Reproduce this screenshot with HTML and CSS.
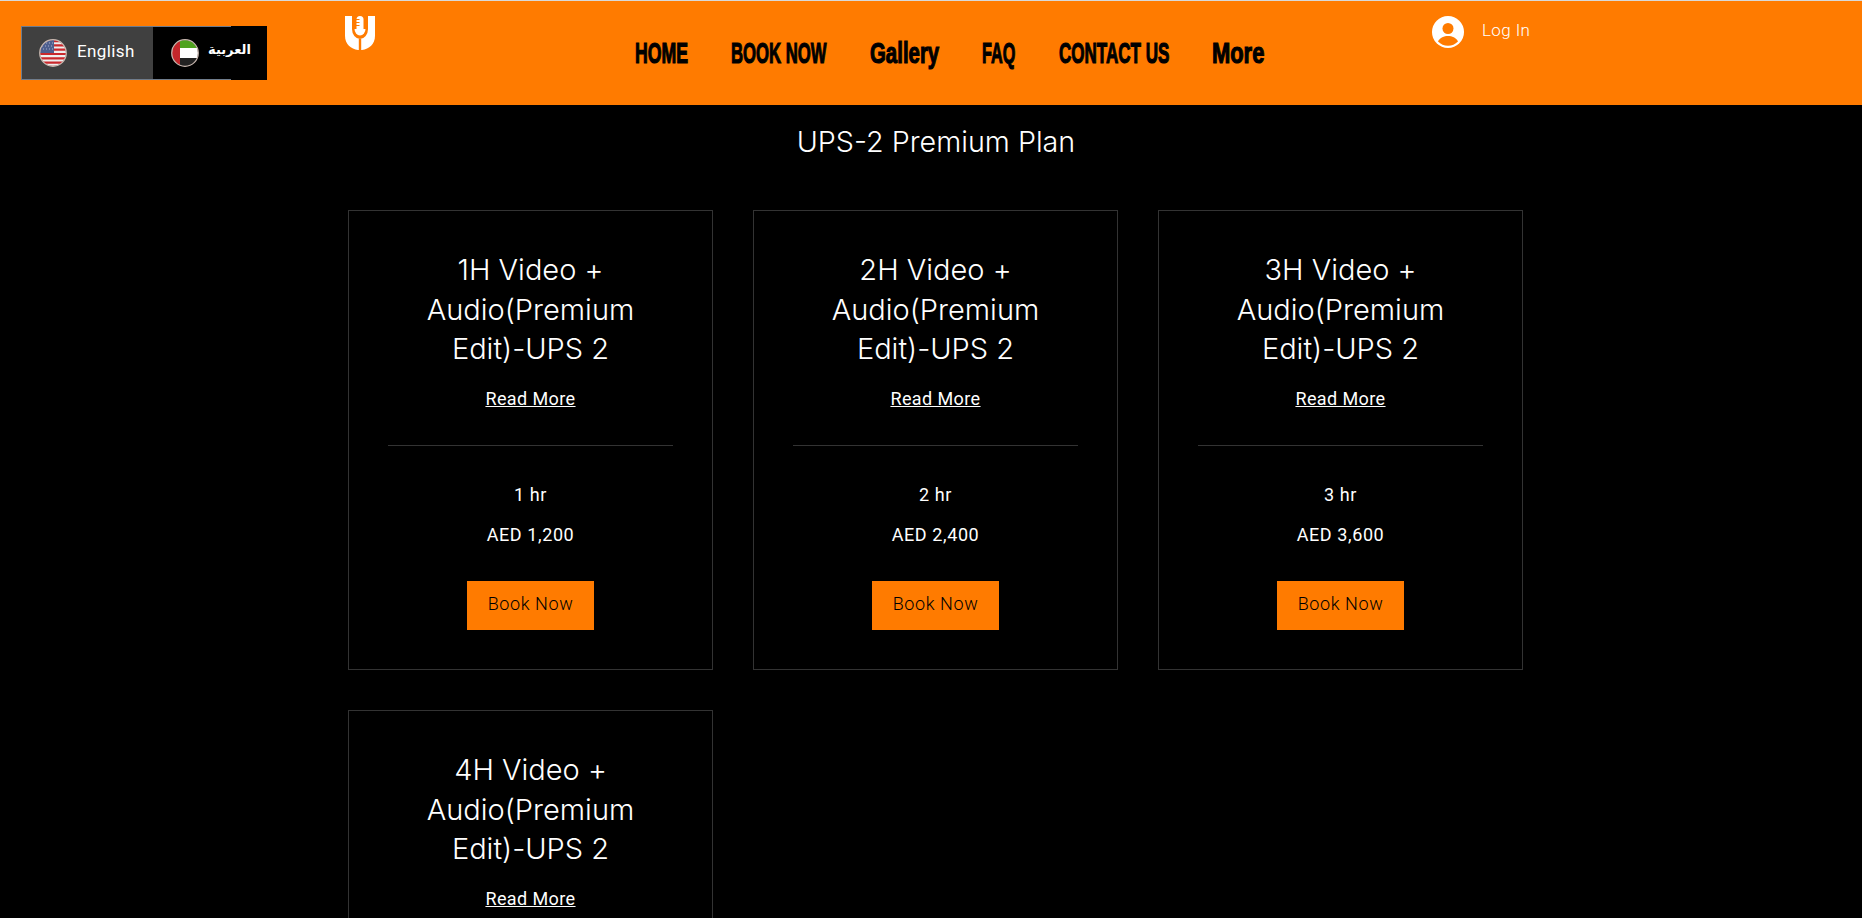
FILE: index.html
```html
<!DOCTYPE html>
<html lang="en">
<head>
<meta charset="utf-8">
<title>UPS-2 Premium Plan</title>
<link rel="stylesheet" href="styles.css">
</head>
<body>
<div class="page">
<header class="header">
  <div class="lang">
    <a class="lang-item lang-en">
      <svg class="flag" viewBox="0 0 28 28">
        <defs><clipPath id="c1"><circle cx="14" cy="14" r="13"/></clipPath></defs>
        <g clip-path="url(#c1)">
          <rect width="28" height="28" fill="#eee"/>
          <path d="M0 1h28v2.200H0zM0 5.300h28v2.200H0zM0 9.600h28v2.200H0zM0 13.900h28v2.200H0zM0 18.200h28v2.200H0zM0 22.500h28v2.200H0zM0 26.800h28v2.200H0z" fill="#c9282d"/>
          <rect width="15" height="14" fill="#4f5f8e"/>
          <path d="M4 4h1M7 4h1M10 4h1M13 4h1M3 7h1M6 7h1M9 7h1M12 7h1M4 10h1M7 10h1M10 10h1M13 10h1" stroke="#aab2cc" stroke-width="1"/>
        </g>
        <circle cx="14" cy="14" r="13.300" fill="none" stroke="#c9b8b0" stroke-width="1.200"/>
      </svg>
      <span class="lang-text">English</span>
    </a>
    <a class="lang-item lang-ar">
      <svg class="flag" viewBox="0 0 28 28">
        <defs><clipPath id="c2"><circle cx="14" cy="14" r="13"/></clipPath></defs>
        <g clip-path="url(#c2)">
          <rect width="28" height="9" fill="#4fa21f"/>
          <rect y="9" width="28" height="10" fill="#fff"/>
          <rect y="19" width="28" height="9" fill="#222"/>
          <rect width="9" height="28" fill="#c4272b"/>
        </g>
        <circle cx="14" cy="14" r="13.300" fill="none" stroke="#c9b8b0" stroke-width="1.200"/>
      </svg>
      <span class="lang-text-ar">العربية</span>
    </a>
  </div>
  <svg class="logo" viewBox="0 0 30 34">
    <path d="M0 0h30v20c0 8-6 13-13 14h-4C6 33 0 28 0 20z" fill="#fff"/>
    <path d="M7 0v13a8 10 0 0 0 16 0V0z" fill="#ff7b00"/>
    <path d="M9.500 13a5.500 6.500 0 0 0 11 0z" fill="#fff"/>
    <rect x="11.500" y="0" width="7" height="17" rx="3.500" fill="#fff"/>
    <path d="M11 3.500h3.500M11 6.500h3.500M11 9.500h3.500" stroke="#ff7b00" stroke-width="1.100"/>
    <rect x="13.800" y="23" width="2.400" height="11" fill="#ff7b00"/>
  </svg>
  <nav class="nav">
    <a class="nav-link nav-home">HOME</a>
    <a class="nav-link nav-book">BOOK NOW</a>
    <a class="nav-link nav-gallery">Gallery</a>
    <a class="nav-link nav-faq">FAQ</a>
    <a class="nav-link nav-contact">CONTACT US</a>
    <a class="nav-link nav-more">More</a>
  </nav>
  <a class="login">
    <svg class="avatar" viewBox="0 0 32 32">
      <circle cx="16" cy="16" r="16" fill="#fff"/>
      <circle cx="16" cy="12.500" r="5.500" fill="#ff7b00"/>
      <path d="M6 25.500c2-4 6-5.500 10-5.500s8 1.500 10 5.500a14 14 0 0 1-20 0z" fill="#ff7b00"/>
    </svg>
    <span class="login-text">Log In</span>
  </a>
</header>
<main class="main">
  <h1 class="plan-title">UPS-2 Premium Plan</h1>
  <div class="cards">
    <article class="card">
      <h2 class="card-title">1H Video + Audio(Premium Edit)-UPS 2</h2>
      <a class="more">Read More</a>
      <hr class="rule">
      <p class="meta">1 hr</p>
      <p class="meta">AED 1,200</p>
      <a class="book">Book Now</a>
    </article>
    <article class="card">
      <h2 class="card-title">2H Video + Audio(Premium Edit)-UPS 2</h2>
      <a class="more">Read More</a>
      <hr class="rule">
      <p class="meta">2 hr</p>
      <p class="meta">AED 2,400</p>
      <a class="book">Book Now</a>
    </article>
    <article class="card">
      <h2 class="card-title">3H Video + Audio(Premium Edit)-UPS 2</h2>
      <a class="more">Read More</a>
      <hr class="rule">
      <p class="meta">3 hr</p>
      <p class="meta">AED 3,600</p>
      <a class="book">Book Now</a>
    </article>
    <article class="card">
      <h2 class="card-title">4H Video + Audio(Premium Edit)-UPS 2</h2>
      <a class="more">Read More</a>
    </article>
  </div>
</main>
</div>
</body>
</html>
```
FILE: styles.css
```css
* { box-sizing: border-box; }
html, body { margin: 0; padding: 0; height: 100%; background: #000; }
.page { height: 918px; overflow: hidden; background: #000; color: #fff; }

.header {
  display: flex;
  align-items: flex-start;
  height: 105px;
  padding-left: 21px;
  background: #ff7b00;
  border-top: 1px solid #d9d9d9;
}
.lang { display: flex; width: 246px; height: 54px; margin-top: 25px; flex: none; }
.lang-item { display: flex; align-items: center; height: 100%; }
.lang-en { width: 132px; padding-left: 17px; background: #404040; border: 1px solid #6f7c8c; border-right: 0; }
.lang-ar {
  width: 114px;
  padding-left: 18px;
  background:
    linear-gradient(#6f7c8c, #6f7c8c) top left / 78px 1px no-repeat,
    linear-gradient(#6f7c8c, #6f7c8c) bottom left / 78px 1px no-repeat,
    #000;
}
.flag { width: 28px; height: 28px; flex: none; }
.lang-text { margin: -4px 0 0 10px; font: 400 17px "Roboto", sans-serif; letter-spacing: 0.4px; color: #fff; }
.lang-text-ar { margin: -8px 0 0 9px; font: 700 13px "DejaVu Sans", sans-serif; color: #fff; }

.logo { width: 30px; height: 34px; margin: 15px 0 0 78px; flex: none; }

.nav {
  display: grid;
  grid-template-columns: 53px 96px 69px 34px 110px 52px;
  column-gap: 43px;
  margin: 36px 0 0 260px;
  flex: none;
}
.nav-link {
  font: 700 30px/32px "Liberation Sans", sans-serif;
  color: #000;
  -webkit-text-stroke: 1.2px #000;
  white-space: nowrap;
  transform-origin: left center;
}
.nav-home { transform: scaleX(0.59); }
.nav-book { transform: scaleX(0.557); }
.nav-gallery { transform: scaleX(0.68); }
.nav-faq { transform: scaleX(0.54); }
.nav-contact { transform: scaleX(0.568); }
.nav-more { transform: scaleX(0.73); }

.login { display: flex; align-items: center; margin: 15px 0 0 168px; flex: none; }
.avatar { width: 32px; height: 32px; }
.login-text { margin: -4px 0 0 18px; font: 300 17px "Roboto", sans-serif; letter-spacing: 0.4px; color: #fff; }

.main { display: flex; flex-direction: column; }
.plan-title {
  margin: 17px 0 0;
  padding-left: 10px;
  font: 300 28.700px/40px "Inter", sans-serif;
  text-align: center;
  color: #fff;
}
.cards {
  display: grid;
  grid-template-columns: repeat(3, 365px);
  gap: 40px;
  margin: 48px 0 0 348px;
}
.card {
  display: flex;
  flex-direction: column;
  align-items: center;
  height: 460px;
  padding: 39px 39px 0;
  border: 1px solid #333;
}
.card-title {
  margin: 0;
  width: 240px;
  font: 300 29px/39.600px "Inter", sans-serif;
  text-align: center;
  color: #fff;
}
.more {
  margin-top: 18px;
  font: 400 18px/24px "Roboto", sans-serif;
  letter-spacing: 0.4px;
  color: #fff;
  text-decoration: underline;
}
.rule { width: 285px; height: 1px; margin: 34px 0 0; border: 0; background: #333; flex: none; }
.meta { margin: 0; font: 400 18px/24px "Roboto", sans-serif; letter-spacing: 0.6px; color: #fff; }
.rule + .meta { margin-top: 37px; }
.meta + .meta { margin-top: 16px; }
.book {
  display: flex;
  align-items: center;
  justify-content: center;
  width: 127px;
  height: 49px;
  margin-top: 34px;
  padding-bottom: 3px;
  background: #ff7b00;
  font: 300 18px "Roboto", sans-serif;
  letter-spacing: 0.6px;
  color: #000;
}
```
